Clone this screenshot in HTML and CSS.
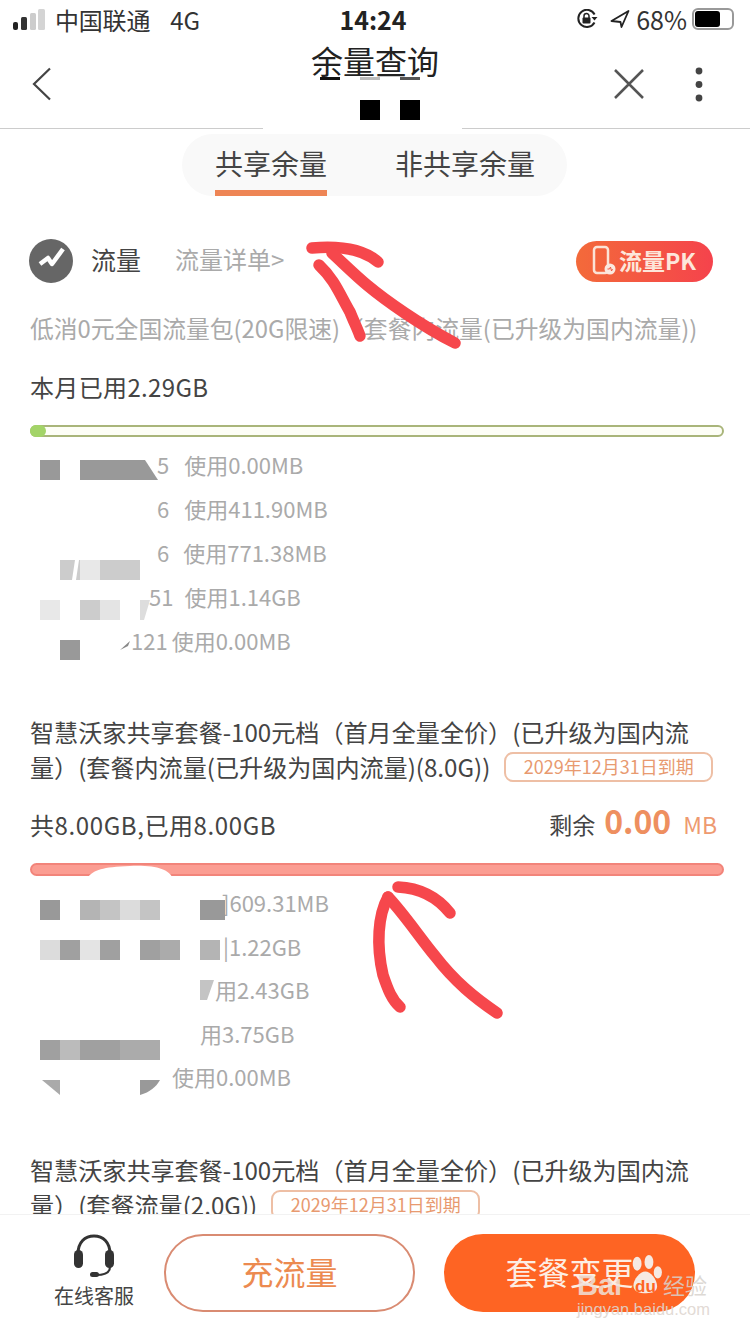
FILE: index.html
```html
<!DOCTYPE html>
<html lang="zh-CN">
<head>
<meta charset="utf-8">
<title>余量查询</title>
<link rel="stylesheet" href="styles.css">
</head>
<body>
<div class="page">
  <header class="status">
    <div class="status-left">
      <svg class="signal" width="34" height="24" viewBox="0 0 34 24"><rect x="1" y="15" width="5" height="8" rx="2" fill="#222"/><rect x="9" y="10" width="6" height="13" rx="1.5" fill="#333"/><rect x="18" y="6" width="6" height="17" rx="1.5" fill="#ccc"/><rect x="26" y="2" width="7" height="21" rx="1.5" fill="#d4d4d4"/></svg>
      <span class="carrier">中国联通</span>
      <span class="net">4G</span>
    </div>
    <div class="clock">14:24</div>
    <div class="status-right">
      <svg width="22" height="20" viewBox="0 0 22 20"><path d="M18.5 13.5A8.6 8.6 0 1 1 18.6 5.5" fill="none" stroke="#222" stroke-width="2"/><path d="M15.5 8h6l-3 3.6z" fill="#222"/><rect x="6.5" y="8.5" width="8" height="6" rx="1" fill="#222"/><path d="M8 9V7a2.500 2.500 0 0 1 5 0v2" fill="none" stroke="#222" stroke-width="1.500"/></svg>
      <svg class="loc" width="20" height="18" viewBox="0 0 20 18"><path d="M18.500 1L1.500 11l9 1 1 5z" fill="none" stroke="#222" stroke-width="1.800" stroke-linejoin="round"/></svg>
      <span class="pct">68%</span>
      <span class="battery"><span class="battery-fill"></span></span>
    </div>
  </header>

  <nav class="nav">
    <svg class="back" width="20" height="34" viewBox="0 0 20 34"><path d="M18 1.500L2 17l16 15.500" fill="none" stroke="#444" stroke-width="2.200"/></svg>
    <h1 class="title">余量查询</h1>
    <div class="nav-actions">
      <svg width="32" height="30" viewBox="0 0 32 30"><path d="M2 1l28 28M30 1L2 29" stroke="#555" stroke-width="2.500"/></svg>
      <svg class="dots" width="8" height="36" viewBox="0 0 8 36"><circle cx="4" cy="4" r="3.400" fill="#444"/><circle cx="4" cy="17.500" r="3.400" fill="#444"/><circle cx="4" cy="31" r="3.400" fill="#444"/></svg>
    </div>
  </nav>

  <main class="main">
    <div class="tabs-wrap">
      <div class="tabs">
        <span class="tab tab-active">共享余量</span>
        <span class="tab">非共享余量</span>
      </div>
    </div>

    <section class="content">
      <div class="flow-head">
        <svg width="44" height="44" viewBox="0 0 44 44"><circle cx="22" cy="22" r="22" fill="#666"/><path d="M11 25l8-6 4 6 11-15" fill="none" stroke="#fff" stroke-width="4.500" stroke-linejoin="round"/></svg>
        <span class="flow-name">流量</span>
        <span class="flow-link">流量详单&gt;</span>
        <span class="pk">
          <svg width="24" height="32" viewBox="0 0 24 32"><rect x="2" y="2" width="14" height="26" rx="3" fill="none" stroke="#fbe3d6" stroke-width="2.500"/><circle cx="18" cy="24" r="5.500" fill="#fbe9e0"/><path d="M15.500 24h2l1-2 1 4 1-2" fill="none" stroke="#ee5a45" stroke-width="1"/></svg>
          <span class="pk-text">流量PK</span>
        </span>
      </div>
      <p class="desc">低消0元全国流量包(20G限速)（套餐内流量(已升级为国内流量))</p>
      <p class="used">本月已用2.29GB</p>
      <div class="bar bar-green"><span class="bar-dot"></span></div>
      <ul class="usage">
        <li class="u u1"><span>5</span><span class="uv">使用0.00MB</span></li>
        <li class="u u2"><span>6</span><span class="uv">使用411.90MB</span></li>
        <li class="u u3"><span>6</span><span class="uv">使用771.38MB</span></li>
        <li class="u u4"><span>51</span><span class="uv">使用1.14GB</span></li>
        <li class="u u5"><span>121</span><span class="uv">使用0.00MB</span></li>
      </ul>

      <article class="plan">
        <p class="plan-title">智慧沃家共享套餐-100元档（首月全量全价）(已升级为国内流<br>量）(套餐内流量(已升级为国内流量)(8.0G))<span class="expire">2029年12月31日到期</span></p>
        <div class="summary">
          <span class="spent">共8.00GB,已用8.00GB</span>
          <span class="left"><span class="left-label">剩余</span><b class="left-num">0.00</b><span class="left-unit">MB</span></span>
        </div>
        <div class="bar bar-red"></div>
        <ul class="usage usage-tight">
          <li class="u v1">]609.31MB</li>
          <li class="u v2">|1.22GB</li>
          <li class="u v3">用2.43GB</li>
          <li class="u v4">用3.75GB</li>
          <li class="u v5">使用0.00MB</li>
        </ul>
      </article>

      <article class="plan">
        <p class="plan-title">智慧沃家共享套餐-100元档（首月全量全价）(已升级为国内流<br>量）(套餐流量(2.0G))<span class="expire">2029年12月31日到期</span></p>
      </article>
    </section>
  </main>

  <footer class="footer">
    <div class="service">
      <svg width="44" height="44" viewBox="0 0 44 44"><path d="M6 20C6 8 13 2 22 2s16 6 16 18" fill="none" stroke="#333" stroke-width="3"/><rect x="2" y="16" width="9" height="18" rx="4.500" fill="#333"/><rect x="33" y="16" width="9" height="18" rx="4.500" fill="#333"/><path d="M38 33c0 5-5 8-14 8" fill="none" stroke="#333" stroke-width="2"/><rect x="18" y="38" width="9" height="5" rx="2.500" fill="#333"/></svg>
      <span class="service-label">在线客服</span>
    </div>
    <button class="btn btn-outline"><span class="btn-text">充流量</span></button>
    <button class="btn btn-solid"><span class="btn-text">套餐变更</span></button>
    <div class="watermark">
      <span class="wm-bai">Bai</span>
      <svg class="wm-paw" width="34" height="40" viewBox="0 0 46 46" preserveAspectRatio="none"><ellipse cx="11" cy="10" rx="6" ry="8" fill="#f6e9e2"/><ellipse cx="27" cy="8" rx="6" ry="8" fill="#f6e9e2"/><ellipse cx="39" cy="20" rx="5.500" ry="7" fill="#f6e9e2"/><path d="M22 19c7 0 16 9 16 17 0 6-6 8-15 8S6 42 6 35c0-7 9-16 16-16z" fill="#f6e9e2"/></svg>
      <span class="wm-du">du</span>
      <span class="wm-jy">经验</span>
      <span class="wm-url">jingyan.baidu.com</span>
    </div>
  </footer>

  <svg class="marks" width="750" height="1334" viewBox="0 0 750 1334">
    <rect x="263" y="122" width="199" height="9" fill="#fff"/>
    <rect x="320" y="77" width="20" height="3" fill="#111"/>
    <rect x="360" y="77" width="20" height="3" fill="#bbb"/>
    <rect x="400" y="77" width="20" height="3" fill="#555"/>
    <rect x="360" y="100" width="20" height="20" fill="#000"/>
    <rect x="400" y="100" width="20" height="20" fill="#000"/>

    <rect x="40" y="460" width="20" height="20" fill="#999"/>
    <path d="M80 460h65l13 20H80z" fill="#999"/>
    <rect x="60" y="560" width="20" height="20" fill="#ccc"/>
    <path d="M75 560h4l-3 20h-4z" fill="#fff"/>
    <rect x="80" y="560" width="20" height="20" fill="#e8e8e8"/>
    <rect x="100" y="560" width="40" height="20" fill="#ccc"/>
    <rect x="40" y="600" width="20" height="20" fill="#e8e8e8"/>
    <rect x="80" y="600" width="20" height="20" fill="#ccc"/>
    <rect x="100" y="600" width="20" height="20" fill="#e4e4e4"/>
    <path d="M140 600h10l-6 20h-4z" fill="#ddd"/>
    <rect x="60" y="640" width="20" height="20" fill="#999"/>
    <path d="M120 650l10-9-2 5z" fill="#888"/>

    <path d="M88 877c6-7 14-10 42-11s38 4 42 11z" fill="#fff"/>
    <rect x="40" y="900" width="20" height="20" fill="#999"/>
    <rect x="80" y="900" width="20" height="20" fill="#b4b4b4"/>
    <rect x="100" y="900" width="20" height="20" fill="#c4c4c4"/>
    <rect x="120" y="900" width="20" height="20" fill="#dcdcdc"/>
    <rect x="140" y="900" width="20" height="20" fill="#c4c4c4"/>
    <rect x="200" y="900" width="25" height="20" fill="#999"/>
    <rect x="40" y="940" width="20" height="20" fill="#dcdcdc"/>
    <rect x="60" y="940" width="20" height="20" fill="#a0a0a0"/>
    <rect x="80" y="940" width="20" height="20" fill="#e4e4e4"/>
    <rect x="100" y="940" width="20" height="20" fill="#a0a0a0"/>
    <rect x="140" y="940" width="20" height="20" fill="#a0a0a0"/>
    <rect x="160" y="940" width="20" height="20" fill="#ababab"/>
    <rect x="200" y="940" width="20" height="20" fill="#b4b4b4"/>
    <path d="M200 980h14l-7 20h-7z" fill="#c4c4c4"/>
    <rect x="40" y="1040" width="20" height="20" fill="#a0a0a0"/>
    <rect x="60" y="1040" width="20" height="20" fill="#bbb"/>
    <rect x="80" y="1040" width="40" height="20" fill="#a0a0a0"/>
    <rect x="120" y="1040" width="40" height="20" fill="#ababab"/>
    <path d="M42 1080h18v15z" fill="#aaa"/>
    <path d="M140 1080h20c-4 7-10 12-20 15z" fill="#999"/>

    <g fill="none" stroke="#f6474c" stroke-linecap="round" stroke-linejoin="round" stroke-width="11.5">
      <path d="M312 248C335 246 362 248 378 262"/>
      <path d="M319 265C335 280 340 295 350 312C354 322 358 330 360 336"/>
      <path d="M332 253C345 265 355 275 367 285C385 300 420 325 455 343"/>
      <path d="M398 887C420 888 438 898 450 913"/>
      <path d="M388 897C378 915 376 945 383 975C388 990 392 1000 400 1007"/>
      <path d="M388 897C405 915 420 938 435 956C455 982 475 998 497 1013"/>
    </g>
  </svg>
</div>
</body>
</html>
```

FILE: styles.css
```css
* { box-sizing: border-box; }
html, body { margin: 0; padding: 0; background: #fff; }
body { font-family: "Noto Sans CJK SC", "Noto Sans", sans-serif; color: #444; }
p, ul, h1 { margin: 0; padding: 0; }
ul { list-style: none; }

.page { position: relative; width: 750px; height: 1334px; overflow: hidden; display: flex; flex-direction: column; background: #fff; }

.status { flex: none; height: 40px; display: grid; grid-template-columns: 1fr auto 1fr; align-items: center; padding: 0 16px 2px 12px; font-size: 24px; color: #333; }
.status-left { display: flex; align-items: center; }
.carrier { margin-left: 9px; letter-spacing: -.2px; }
.net { margin-left: 20px; }
.clock { font-weight: 700; font-size: 25px; color: #222; }
.status-right { display: flex; align-items: center; justify-content: flex-end; }
.loc { margin-left: 12px; }
.pct { font-size: 25px; margin-left: 6px; }
.battery { width: 42px; height: 22px; border: 2px solid #999; border-radius: 6px; padding: 1px; margin-left: 5px; display: block; }
.battery-fill { display: block; width: 25px; height: 100%; background: #000; border-radius: 3px; }

.nav { flex: none; height: 89px; border-bottom: 1px solid #ccc; position: relative; display: flex; align-items: flex-start; justify-content: space-between; padding: 27px 47px 0 32px; }
.title { position: absolute; left: 0; right: 0; top: 0; text-align: center; font-size: 32px; font-weight: 400; line-height: 40px; color: #222; }
.nav-actions { display: flex; gap: 50px; align-items: flex-start; }
.nav-actions svg:first-child { margin-top: 2px; }

.main { flex: 1; min-height: 0; overflow: hidden; }
.tabs-wrap { display: flex; padding: 5px 0 0 182px; }
.tabs { width: 385px; height: 62px; border-radius: 31px; background: #f9f9f9; display: flex; gap: 68px; padding: 0 0 0 33px; }
.tab { height: 62px; line-height: 59px; font-size: 28px; color: #444; }
.tab-active { border-bottom: 6px solid #ee8555; }

.content { padding: 0 26px 0 30px; }
.flow-head { height: 44px; margin: 43px 0 0 -1px; display: flex; align-items: center; }
.flow-name { margin: 0 0 5px 18px; font-size: 25px; color: #444; }
.flow-link { margin: 0 0 5px 34px; font-size: 24px; color: #aaa; }
.pk { margin-left: auto; margin-right: 11px; width: 137px; height: 41px; border-radius: 21px; background: linear-gradient(90deg, #f36a3a, #f5434c); color: #fde6da; font-size: 23px; font-weight: 700; display: flex; align-items: center; padding-left: 16px; gap: 3px; }
.pk-text { margin-bottom: 3px; }
.desc { margin-top: 30px; height: 34px; font-size: 23.8px; line-height: 30px; color: #aaa; white-space: nowrap; }
.used { margin-top: 25px; height: 34px; font-size: 24px; line-height: 30px; letter-spacing: .35px; color: #444; }

.bar { width: 694px; border-radius: 7px; }
.bar-green { margin-top: 19px; height: 12px; border: 2px solid #a9b57a; background: #fdfef6; position: relative; }
.bar-dot { position: absolute; left: -2px; top: -2px; width: 16px; height: 12px; border-radius: 6px; background: #a3d468; }
.bar-red { margin-top: 17px; height: 13px; background: #fb9d92; border: 2px solid #f2847a; }

.usage { margin-top: 7px; }
.usage-tight { margin-top: 6px; padding-bottom: 2.5px; }
.usage-tight .u { height: 43.5px; }
.u { height: 44px; line-height: 40px; font-size: 22px; color: #aaa; white-space: nowrap; }
.u1, .u2, .u3 { padding-left: 127px; }
.u4 { padding-left: 119px; }
.u5 { padding-left: 101px; }
.uv { margin-left: 15px; }
.u3 .uv { margin-left: 14px; }
.u4 .uv { margin-left: 11px; }
.u5 .uv { margin-left: 4px; }
.v1 { padding-left: 192px; }
.v2 { padding-left: 193px; }
.v3 { padding-left: 185px; }
.v4 { padding-left: 170px; }
.v5 { padding-left: 142px; }

.plan { margin-top: 50px; }
.plan-title { padding-bottom: 2px; font-size: 24.1px; line-height: 35px; color: #444; white-space: nowrap; }
.expire { display: inline-block; margin-left: 14px; height: 30px; width: 209px; border: 2px solid #eebfa5; border-radius: 9px; font-size: 18px; line-height: 25px; text-align: center; color: #e89a70; vertical-align: 3px; }
.summary { margin-top: 20px; height: 40px; display: flex; align-items: center; justify-content: space-between; font-size: 24px; padding-right: 7px; }
.spent { padding-bottom: 4px; letter-spacing: .6px; }
.left { display: flex; align-items: baseline; padding-bottom: 12px; }
.left-label { font-size: 23px; color: #444; }
.left-num { font-size: 32px; font-weight: 700; color: #ee8f5f; margin-left: 9px; }
.left-unit { font-size: 23px; color: #ee9a70; margin-left: 12px; }

.footer { flex: none; height: 120px; position: relative; z-index: 2; background: #fff; border-top: 1px solid #f2f2f2; display: flex; align-items: flex-start; padding: 19px 0 0 54px; }
.service { width: 80px; display: flex; flex-direction: column; align-items: center; }
.service-label { font-size: 20px; line-height: 24px; margin-top: 6px; color: #444; white-space: nowrap; }
.btn { width: 251px; height: 78px; border-radius: 39px; font-family: inherit; font-size: 32px; padding: 0 0 5px; }
.btn-outline { margin-left: 30px; background: #fff; border: 2px solid #d98b72; color: #ec8a50; }
.btn-solid { margin-left: 29px; background: #fe6423; border: 0; color: #fdeee3; }

.watermark { position: absolute; left: 577px; top: 20px; width: 140px; height: 100px; color: rgba(238, 226, 218, .85); }
.wm-bai { position: absolute; left: 0; top: 33px; font-family: "Liberation Sans", sans-serif; font-size: 29px; font-weight: 700; line-height: 34px; }
.wm-paw { position: absolute; left: 52px; top: 20px; }
.wm-du { position: absolute; left: 58px; top: 42px; font-family: "Liberation Sans", sans-serif; font-size: 17px; font-weight: 700; line-height: 20px; color: #fe6423; }
.wm-jy { position: absolute; left: 86px; top: 34px; font-size: 22px; line-height: 30px; color: rgba(215, 210, 205, .85); }
.wm-url { position: absolute; left: 0; top: 63px; font-family: "Liberation Sans", sans-serif; font-size: 16.5px; line-height: 22px; white-space: nowrap; color: rgba(222, 214, 208, .9); }

.marks { position: absolute; left: 0; top: 0; pointer-events: none; }
```
